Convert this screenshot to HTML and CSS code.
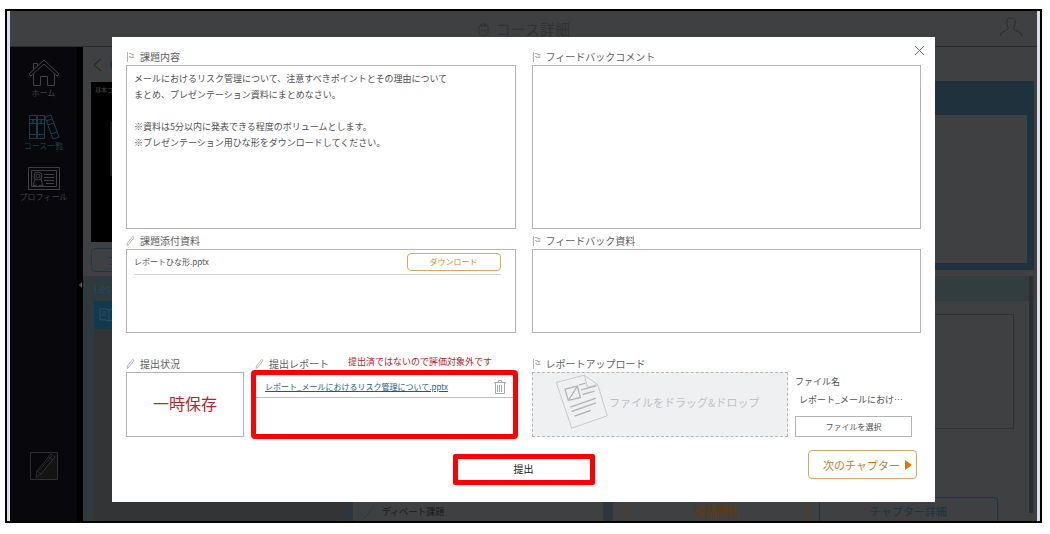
FILE: index.html
```html
<!DOCTYPE html>
<html lang="ja">
  <head>
    <meta charset="UTF-8" />
    <meta name="viewport" content="width=device-width, initial-scale=1.0" />
    <title>コース詳細</title>
    <link rel="stylesheet" href="styles.css">
  </head>
  <body>
    <div class="frame">
      <div class="app">
        <div class="page">
          <header class="header">
            <h1>
              <svg width="13" height="14" viewBox="0 0 13 14"><path d="M2 4h9v7q0 2-2 2H4q-2 0-2-2zM4 4V2h5v2M5 7v3M8 7v3" /></svg>
              コース詳細
            </h1>
            <svg class="user" width="24" height="20" viewBox="0 0 24 20"><path d="M1 19q0-3 3-4l4-2q2-1 1-3Q7 7 8 3q1-2 4-2t4 2q1 4-1 7-1 2 1 3l4 2q3 1 3 4" /></svg>
          </header>
          <div class="main">
            <nav class="sidebar">
              <a class="nav_item" href="#">
                <svg width="32" height="28" viewBox="0 0 32 28"><path d="M1 15 16 1l15 14-2 2L16 5 3 17zM5.5 15v11.500h7v-9h7v9h7V15M5.500 10V4.500h4V7" /></svg>
                ホーム
              </a>
              <a class="nav_item active" href="#">
                <svg width="32" height="26" viewBox="0 0 32 26"><path d="M1.500 1.500h7v23h-7zM9.500 1.500h7v23h-7zM1 5.500h15M1 9.500h15M1 20.500h15M17 3l6-2 8 22-6 2zM18 7l6-2M20 11l6-2M23 20l6-2" /><circle cx="5" cy="7.500" r="1" /><circle cx="13" cy="7.500" r="1" /></svg>
                コース一覧
              </a>
              <a class="nav_item" href="#">
                <svg width="32" height="24" viewBox="0 0 32 24"><path d="M.5.5h31v22H.5zM3.500 3.500h25v16h-25zM7 12l-2 7 3-1 2 2 2-2 3 1-2-7M16 7.500h10M16 10.500h10M16 13.500h10M18 16.500h8" /><circle cx="10" cy="9" r="4" /><circle cx="10" cy="9" r="2" /></svg>
                プロフィール
              </a>
              <a class="nav_item memo" href="#" aria-label="メモ">
                <svg width="28" height="28" viewBox="0 0 28 28"><path class="shade" d="M27 1v26H4z" /><path d="M.5.5h27v27H.5zM6 25l1-6L21 2l4 3L11 22zM7 19l4 3M19 5l4 3M9 19 22 4" /></svg>
              </a>
              <span class="toggle"></span>
            </nav>
            <div class="content">
              <div class="hero">
                <div class="lecture">
                  <div class="crumb">
                    <svg width="9" height="14" viewBox="0 0 9 14"><path d="M8 1 1 7l7 6" /></svg>
                    <span class="dot"></span>
                  </div>
                  <div class="player">基本コ<div class="slide"></div></div>
                  <button class="course_button">コ</button>
                </div>
                <div class="info"></div>
              </div>
              <div class="lessons">
                <div class="lesson_nav">
                  <div class="lesson_title">Les</div>
                  <div class="lesson_item">
                    <svg width="22" height="16" viewBox="0 0 22 16"><path d="M2 2q5-1 9 1 4-2 9-1v11q-5-1-9 1-4-2-9-1zM11 3v11M4 5h4M4 8h4" /></svg>
                  </div>
                  <div class="lesson_rest"></div>
                </div>
                <div class="chapters">
                  <div class="chapter">
                    <svg width="16" height="14" viewBox="0 0 16 14"><path d="M1 8l5 5L15 1" /></svg>
                    ディベート課題
                  </div>
                </div>
                <div class="detail">
                  <div class="detail_head"></div>
                  <div class="detail_box"></div>
                  <div class="detail_buttons">
                    <button class="start_button">受講開始</button>
                    <button>チャプター詳細</button>
                  </div>
                  <div class="scrollbar"></div>
                </div>
              </div>
            </div>
          </div>
        </div>

        <div class="overlay">
          <div class="modal" role="dialog" aria-label="課題提出">
            <button class="close" aria-label="閉じる">
              <svg width="11" height="11" viewBox="0 0 11 11"><path d="M1 1l9 9M10 1l-9 9" /></svg>
            </button>
            <div class="columns">
              <section>
                <h2><svg class="icon" viewBox="0 0 9 10"><path d="M1.500 0v10M3 1.500h2.500v1H8L6.500 4 8 5.500H4.500v-1H3" /></svg>課題内容</h2>
                <div class="box task">
                  <p>メールにおけるリスク管理について、注意すべきポイントとその理由について<br>まとめ、プレゼンテーション資料にまとめなさい。</p>
                  <p>※資料は5分以内に発表できる程度のボリュームとします。<br>※プレゼンテーション用ひな形をダウンロードしてください。</p>
                </div>
              </section>
              <section>
                <h2><svg class="icon" viewBox="0 0 9 10"><path d="M1.500 0v10M3 1.500h2.500v1H8L6.500 4 8 5.500H4.500v-1H3" /></svg>フィードバックコメント</h2>
                <div class="box"></div>
              </section>
              <section>
                <h2><svg class="icon" viewBox="0 0 9 10"><path d="M1 9.500 1.500 7 6.500.5l1.500 1L3 8z" /></svg>課題添付資料</h2>
                <div class="box files">
                  <div class="file_row">
                    <span>レポートひな形.pptx</span>
                    <button class="download">ダウンロード</button>
                  </div>
                </div>
              </section>
              <section>
                <h2><svg class="icon" viewBox="0 0 9 10"><path d="M1.500 0v10M3 1.500h2.500v1H8L6.500 4 8 5.500H4.500v-1H3" /></svg>フィードバック資料</h2>
                <div class="box files"></div>
              </section>
              <div class="submit_state">
                <section>
                  <h2><svg class="icon" viewBox="0 0 9 10"><path d="M1 9.500 1.500 7 6.500.5l1.500 1L3 8z" /></svg>提出状況</h2>
                  <div class="box state">一時保存</div>
                </section>
                <section>
                  <h2 class="report_title"><svg class="icon" viewBox="0 0 9 10"><path d="M1 9.500 1.500 7 6.500.5l1.500 1L3 8z" /></svg>提出レポート<span class="warning">提出済ではないので評価対象外です</span></h2>
                  <div class="box report">
                    <div class="report_row">
                      <a href="#">レポート_メールにおけるリスク管理について.pptx</a>
                      <button class="delete" aria-label="削除">
                        <svg width="12" height="14" viewBox="0 0 12 14"><path d="M0 2.500h12M4.500 2.500v-2h3v2M1.500 3v10.500h9V3M3.500 5v7M5.500 5v7M7.500 5v7" /></svg>
                      </button>
                    </div>
                  </div>
                </section>
              </div>
              <section>
                <h2><svg class="icon" viewBox="0 0 9 10"><path d="M1.500 0v10M3 1.500h2.500v1H8L6.500 4 8 5.500H4.500v-1H3" /></svg>レポートアップロード</h2>
                <div class="upload">
                  <div class="dropzone">
                    <svg width="55" height="57" viewBox="620 80 165 170"><path class="thin" d="M627 108l84-22 40 28 29 94-107 37zM711 86l9 36 31-8" /><path d="M653 128l37-9 9 34-36 9zM690 119l-27 43M695 116l19-6M701 130l46-12M706 144l36-10M669 182l77-27M673 195l73-26M681 209l49-17" /></svg>
                    ファイルをドラッグ&amp;ドロップ
                  </div>
                  <div class="chosen">
                    <div>ファイル名</div>
                    <div class="chosen_name">レポート_メールにおけ…</div>
                    <button>ファイルを選択</button>
                  </div>
                </div>
              </section>
            </div>
            <div class="actions">
              <button class="submit">提出</button>
              <button class="next">次のチャプター<span class="arrow"></span></button>
            </div>
          </div>
        </div>
      </div>
    </div>
  </body>
</html>
```
FILE: styles.css
```css
* {
  box-sizing: border-box;
}
body {
  margin: 0;
  padding: 9px 8px 11px 5px;
  background: #ffffff;
  color: #505050;
  font-family: "Noto Sans CJK JP", sans-serif;
  font-size: 9px;
  line-height: 16px;
}
h1,
h2,
p {
  margin: 0;
  font-weight: normal;
}
button {
  margin: 0;
  padding: 0;
  background: none;
  border: 0;
  color: inherit;
  font: inherit;
  cursor: pointer;
}
svg {
  display: block;
  flex: none;
  fill: none;
  stroke: currentColor;
}
.frame {
  border: 2px solid #000000;
  padding: 0 3px;
  background: #dcdce6;
}
.app {
  display: grid;
  min-height: calc(100vh - 24px);
  background: #3f4041;
}
.page,
.overlay {
  grid-area: 1 / 1;
  min-width: 0;
}

/* page behind the dialog */
.page {
  display: flex;
  flex-direction: column;
  overflow: hidden;
}
.header {
  display: flex;
  align-items: center;
  height: 36px;
  padding-right: 14px;
  border-bottom: 1px solid #2b2c2d;
  color: #2b2c2d;
}
.header h1 {
  display: flex;
  flex: 1;
  align-items: center;
  justify-content: center;
  gap: 6px;
  padding-left: 38px;
  color: #313233;
  font-size: 15px;
}
.user {
  margin-bottom: 4px;
}
.main {
  display: flex;
  flex: 1;
}
.sidebar {
  position: relative;
  display: flex;
  flex-direction: column;
  gap: 15px;
  width: 73px;
  padding: 12px 0 41px;
  border-right: 6px solid #000000;
  background: #08080c;
}
.nav_item {
  display: flex;
  flex-direction: column;
  align-items: center;
  color: #424244;
  font-size: 8px;
  line-height: 12px;
  text-decoration: none;
}
.nav_item.active {
  color: #17404c;
}
.nav_item.memo {
  margin-top: auto;
  color: #2f2f2f;
}
.shade {
  fill: #141414;
  stroke: none;
}
.toggle {
  position: absolute;
  top: 235px;
  right: -5px;
  border: 3px solid transparent;
  border-left: 0;
  border-right-color: #55585a;
}
.content {
  display: flex;
  flex: 1;
  flex-direction: column;
  min-width: 0;
}
.hero {
  display: flex;
  height: 229px;
}
.lecture,
.info {
  flex: 1;
}
.lecture {
  padding-left: 8px;
}
.crumb {
  display: flex;
  align-items: center;
  gap: 8px;
  height: 35px;
  padding-left: 2px;
  color: #1c1d1e;
}
.dot {
  width: 12px;
  height: 12px;
  border-radius: 50%;
  background: #12394e;
}
.player {
  height: 160px;
  padding-left: 4px;
  background: #000000;
  color: #4c4c4c;
  font-size: 6px;
}
.slide {
  width: 60px;
  height: 54px;
  margin: 24px 0 0 15px;
  background: #1a1a1b;
}
.course_button {
  width: 120px;
  height: 24px;
  margin-top: 6px;
  padding-left: 14px;
  border: 1px solid #1d3a48;
  border-radius: 4px;
  color: #1d3a48;
  font-size: 11px;
  text-align: left;
}
.info {
  margin: 34px 3px 6px 0;
  border: 7px solid #1e313c;
  border-top-width: 34px;
}
.lessons {
  display: flex;
  flex: 1;
}
.lesson_nav {
  display: flex;
  flex-direction: column;
  width: 260px;
  padding-left: 11px;
  background: #2f3a3e;
}
.lesson_title {
  height: 25px;
  color: #1b4b60;
  font-size: 11px;
  line-height: 25px;
}
.lesson_item {
  height: 28px;
  padding: 6px 4px;
  background: #12394e;
  color: #2b5060;
}
.lesson_rest {
  flex: 1;
  background: #333435;
}
.chapters {
  display: flex;
  width: 270px;
  border: solid #2b373d;
  border-width: 0 10px;
}
.chapter {
  display: flex;
  align-items: center;
  align-self: flex-end;
  gap: 7px;
  height: 19px;
  padding-left: 6px;
  color: #19191a;
}
.chapter svg {
  color: #203f4c;
}
.detail {
  position: relative;
  display: flex;
  flex: 1;
  flex-direction: column;
  border-right: 3px solid #3f4041;
}
.detail_head {
  height: 25px;
  background: #333d40;
}
.detail_box {
  height: 115px;
  margin: 13px 20px 0 14px;
  border: 1px solid #303132;
}
.detail_buttons {
  display: grid;
  grid-template-columns: 1fr 1fr;
  gap: 12px;
  margin: auto 36px -4px 14px;
}
.detail_buttons button {
  height: 28px;
  border: 1px solid #173646;
  border-radius: 4px;
  color: #173646;
  font-size: 11px;
}
.detail_buttons .start_button {
  border-color: #66380f;
  color: #66380f;
}
.scrollbar {
  position: absolute;
  top: 0;
  right: 1px;
  bottom: 8px;
  width: 4px;
  background: #292f32;
}

/* dialog */
.overlay {
  position: relative;
  padding: 26px 102px 19px;
}
.modal {
  position: relative;
  padding: 8px 14px 17px;
  background: #ffffff;
}
.close {
  position: absolute;
  top: 8px;
  right: 10px;
  color: #707070;
}
.columns {
  display: grid;
  grid-template-columns: 1fr 1fr;
  column-gap: 16px;
}
.columns section {
  min-width: 0;
}
h2 {
  display: flex;
  align-items: center;
  height: 20px;
  padding-top: 4px;
  color: #606060;
  font-size: 10px;
}
.icon {
  width: 9px;
  height: 10px;
  margin-right: 5px;
  color: #b4b4b4;
}
.box {
  height: 164px;
  border: 1px solid #b4b4b4;
}
.task {
  padding: 5px 7px;
}
.task p {
  margin-bottom: 16px;
}
.files {
  height: 84px;
  margin-bottom: 19px;
  padding: 0 14px 0 7px;
}
.file_row {
  display: flex;
  align-items: center;
  justify-content: space-between;
  height: 25px;
  border-bottom: 1px solid #d4d8d8;
  font-size: 8px;
}
.download {
  width: 94px;
  height: 18px;
  border: 1px solid #dba75c;
  border-radius: 4px;
  color: #d08a35;
}
.submit_state {
  display: grid;
  grid-template-columns: 118px 1fr;
  gap: 9px;
}
.report_title {
  padding-left: 2px;
}
.state {
  display: flex;
  align-items: center;
  justify-content: center;
  height: 65px;
  padding-bottom: 4px;
  color: #b5232b;
  font-size: 16px;
}
.warning {
  margin: 0 0 4px 19px;
  color: #b5232b;
  font-size: 9px;
  white-space: nowrap;
}
.report {
  height: 65px;
  border-radius: 2px;
  outline: 5px solid #ff0000;
  outline-offset: -3px;
}
.report_row {
  display: flex;
  align-items: center;
  justify-content: space-between;
  height: 25px;
  padding: 3px 9px 0 11px;
  border-bottom: 1px solid #bcc0c0;
  font-size: 8px;
}
.report_row a {
  color: #1f5a86;
}
.delete {
  color: #a8a8a8;
}
.upload {
  display: flex;
  gap: 7px;
}
.dropzone {
  display: flex;
  flex: 1;
  align-items: center;
  justify-content: center;
  height: 65px;
  padding: 0 6px 6px 0;
  border: 1px dashed #b8b8b8;
  background: #eff0f2;
  color: #c0c1c3;
  font-size: 11px;
  white-space: nowrap;
}
.dropzone svg {
  stroke: #b4b5b7;
  stroke-width: 4;
}
.dropzone .thin {
  stroke-width: 2;
}
.chosen {
  width: 126px;
  padding: 2px 9px 0 0;
}
.chosen_name {
  margin: 2px 0 8px;
  padding-left: 4px;
  white-space: nowrap;
}
.chosen button {
  width: 100%;
  height: 21px;
  border: 1px solid #b4b4b4;
  font-size: 8px;
}
.actions {
  display: grid;
  grid-template-columns: 1fr 142px 1fr;
  align-items: end;
  height: 35px;
  margin-top: 13px;
}
.submit {
  grid-column: 2;
  height: 31px;
  padding-bottom: 2px;
  border: 5px solid #ff0000;
  border-radius: 2px;
  color: #222222;
  font-size: 10px;
}
.next {
  display: flex;
  align-items: center;
  align-self: start;
  justify-content: flex-end;
  justify-self: end;
  gap: 5px;
  width: 109px;
  height: 29px;
  margin-right: 4px;
  padding-right: 4px;
  border: 1px solid #dba75c;
  border-radius: 4px;
  color: #cc7a1c;
  font-size: 11px;
}
.arrow {
  border: 5px solid transparent;
  border-right: 0;
  border-left: 7px solid #d9770e;
}
```
